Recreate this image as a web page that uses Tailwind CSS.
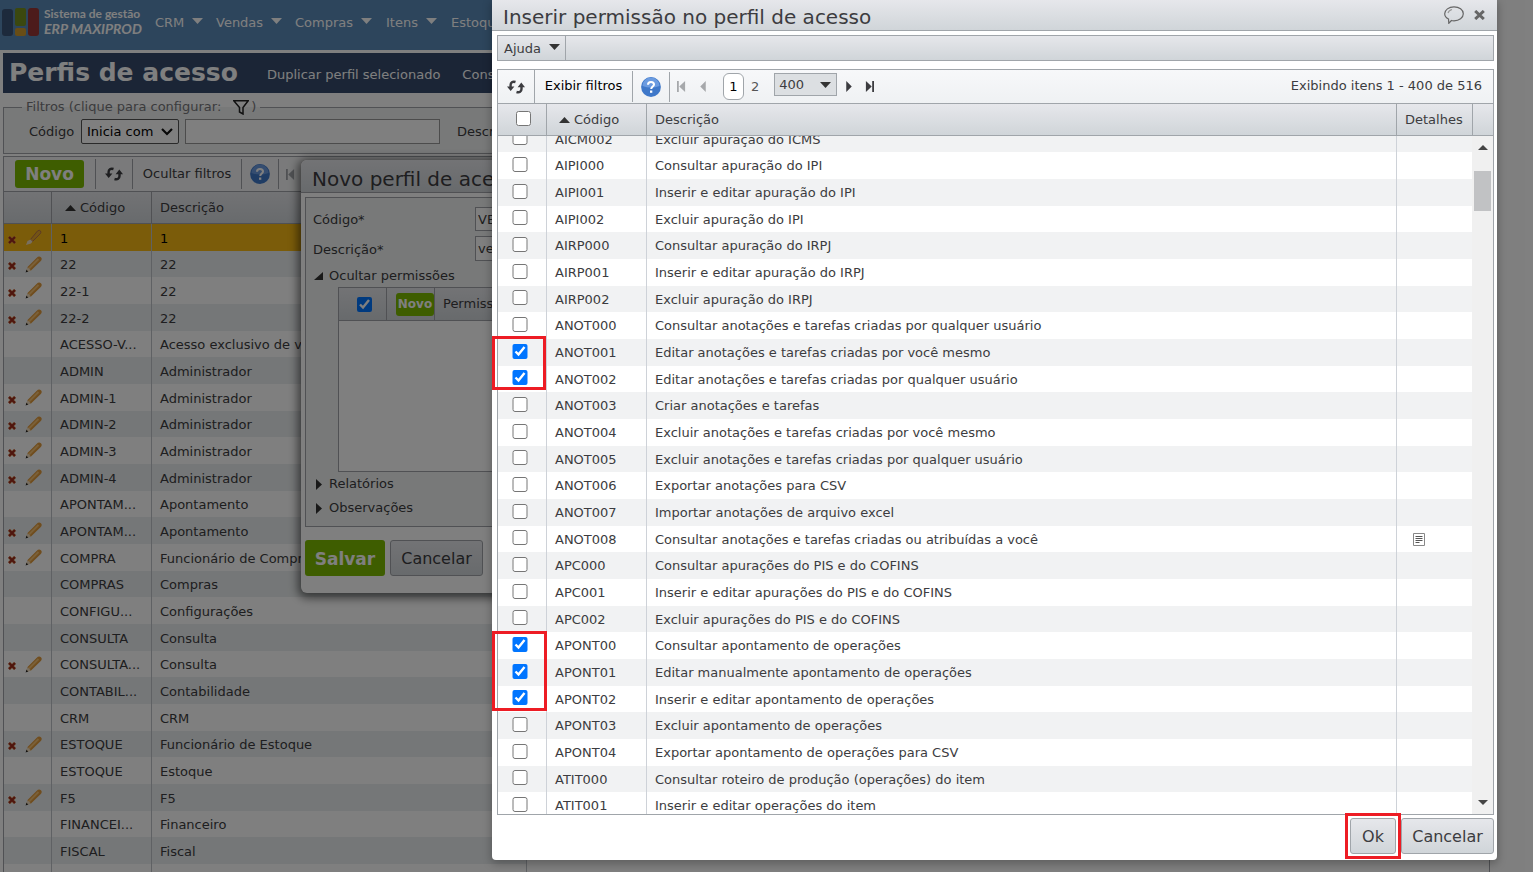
<!DOCTYPE html>
<html lang="pt-BR">
<head>
<meta charset="utf-8">
<title>Perfis de acesso</title>
<script src="https://cdn.jsdelivr.net/npm/@tailwindcss/browser@4"></script>
</head>
<body class="relative h-screen overflow-hidden bg-white pr-[40px] font-['DejaVu_Sans',Verdana,sans-serif] text-[13px] leading-4 text-[#3c3c40]">

<svg class="hidden">
  <symbol id="refresh" viewBox="0 0 18 14"><path d="M8.500 2C5.500 1 3.600 2.500 3.600 5v3M9.500 12c3 1 5-.5 5-3V6" fill="none" stroke="currentColor" stroke-width="2.400"/><path d="M0 6.500h7.400L3.700 11zM10.600 7.300H18L14.300 2.600z" fill="currentColor"/></symbol>
  <symbol id="help" viewBox="0 0 20 20"><circle cx="10" cy="10" r="9.900" fill="#3f78c9"/><path d="M1.500 9a8.500 8.500 0 0 1 17 0q-8.500 3-17 0z" fill="#6b9be0"/><path d="M7 7.700C7 5.800 8.300 5 10 5s3 .9 3 2.500c0 2-2.800 2-2.800 4.500" fill="none" stroke="#fff" stroke-width="2"/><rect x="9" y="13.500" width="2.300" height="2.300" fill="#fff"/></symbol>
  <symbol id="first" viewBox="0 0 10 12"><path d="M0 0h2v12H0zM9 0v12L2.500 6z" fill="currentColor"/></symbol>
  <symbol id="prev" viewBox="0 0 10 12"><path d="M8 0v12L2 6z" fill="currentColor"/></symbol>
  <symbol id="del" viewBox="0 0 8 8"><path d="M1 1l6 6M7 1L1 7" stroke="#d98a4a" stroke-width="3"/><path d="M1 1l6 6M7 1L1 7" stroke="#9c2a1c" stroke-width="2"/></symbol>
  <symbol id="pencil" viewBox="0 0 17 17"><path d="M1 16l1.500-5L11.500 2Q14-.5 15.900 1.300T15.300 5.500L6 14.600z" fill="#e09a3c"/><path d="M4 12.500L13.500 3" stroke="#f6c070" stroke-width="2"/><path d="M1 16l1.500-5 3.500 3.600z" fill="#f0dcc0"/><path d="M.6 16.400l.9-2.600 1.700 1.700z" fill="#222"/></symbol>
  <symbol id="pencil-light" viewBox="0 0 17 17"><path d="M5.500 10.500L12.500 2Q14.500.5 15.500 2T15 5L7.500 12.500z" fill="#e9a92a" stroke="#b8744a" stroke-width="1"/><path d="M1 16l1.500-4 3-1.500 2 2-1.500 2z" fill="#f3dfc0"/></symbol>
</svg>

<!-- Page behind the dialogs -->
<header class="flex h-[50px] items-start bg-[#5a8ab8] text-white">
  <svg class="mt-2 ml-[2px] h-[29px] w-[37px] shrink-0" viewBox="0 0 37 29"><rect y="1" width="11" height="27" rx="3" fill="#3b5478"/><rect x="13" width="11" height="18" rx="2" fill="#76901e"/><rect x="13" y="20" width="11" height="8" rx="2" fill="#d09a2c"/><rect x="26" width="11" height="28" rx="3" fill="#983636"/></svg>
  <a href="#" class="mt-[7px] ml-[5px] w-[111px] shrink-0 font-[Lato] leading-[15px] font-bold"><span class="block text-xs leading-[14px]">Sistema de gestão</span><span class="block text-[14px] font-bold italic">ERP MAXIPROD</span></a>
  <nav id="nav" class="mt-[15px] flex"></nav>
</header>
<main class="px-[3px] pt-[3px]">
  <div class="flex h-10 items-center overflow-hidden bg-[#364a6c] pl-[6px] whitespace-nowrap text-white">
    <h1 class="w-[258px] shrink-0 text-[25px] leading-8 font-bold">Perfis de acesso</h1>
    <a href="#" class="mt-1">Duplicar perfil selecionado</a>
    <a href="#" class="mt-1 ml-[22px]">Consultar</a>
  </div>
  <fieldset class="mt-[6px] border border-[#a0a3a8] bg-[#f1f3f3] pb-[9px] pl-[18px]">
    <legend class="flex items-center px-1 text-[#77777b]">Filtros (clique para configurar:
      <svg class="mr-[2px] ml-3 h-[15px] w-4" viewBox="0 0 16 15"><path d="M.8.8h14.400L10 7.500V14l-3.500-2V7.500z" fill="none" stroke="#222" stroke-width="1.500"/></svg>)</legend>
    <div class="mt-1 flex items-center whitespace-nowrap">
      <label for="op" class="w-[59px] pl-[7px]">Código</label>
      <div class="relative">
        <select id="op" class="block h-[25px] w-[98px] appearance-none rounded-[2px] border border-[#555] bg-white pl-[5px] text-[13px] text-black"><option>Inicia com</option></select>
        <svg class="pointer-events-none absolute top-[9px] right-[6px] h-2 w-3" viewBox="0 0 12 8"><path d="M1 1l5 5 5-5" fill="none" stroke="#111" stroke-width="2.200"/></svg>
      </div>
      <input aria-label="Código" class="ml-[6px] h-[25px] w-[255px] border border-[#999] bg-white">
      <label for="desc" class="ml-[17px]">Descrição</label><input id="desc" class="ml-2 w-40 border border-[#999]">
    </div>
  </fieldset>
  <section class="mt-[2px] border border-b-0 border-[#a0a3a8]">
    <div class="flex h-[34px] items-center bg-[#f4f5f6]">
      <button class="ml-[11px] h-7 w-[69px] shrink-0 rounded-[3px] bg-[#7cba00] text-[17px] font-bold text-white">Novo</button>
      <button aria-label="Atualizar" class="ml-[11px] flex h-[30px] w-[38px] items-center justify-center border-x border-[#a0a3a8]"><svg class="h-[14px] w-[18px]"><use href="#refresh"/></svg></button>
      <button class="h-[30px] w-[109px] whitespace-nowrap border-r border-[#a0a3a8]">Ocultar filtros</button>
      <button aria-label="Ajuda" class="flex h-[30px] w-[37px] items-center justify-center border-r border-[#a0a3a8]"><svg class="h-5 w-5"><use href="#help"/></svg></button>
      <svg class="ml-[7px] h-[11px] w-[9px] text-[#a0a3a8]"><use href="#first"/></svg>
    </div>
    <table class="w-[523px] table-fixed border-separate border-spacing-0 border-r border-[#bfc3c8] text-left whitespace-nowrap">
      <colgroup><col class="w-[48px]"><col class="w-[100px]"><col></colgroup>
      <thead><tr class="h-[33px] bg-linear-to-b from-[#e6e7eb] to-[#d0d5d9]">
        <th aria-label="Ações" class="border-y border-r border-[#a0a3a8]"></th><th class="border-y border-r border-[#a0a3a8] p-0 pl-[13px] font-normal"><span class="flex items-center gap-1"><svg class="h-[6px] w-[11px]" viewBox="0 0 11 6"><path d="M0 6L5.500 0 11 6z" fill="#333"/></svg>Código</span></th><th class="border-y border-[#a0a3a8] p-0 pl-2 font-normal">Descrição</th>
      </tr></thead>
      <tbody id="profiles"></tbody>
    </table>
  </section>
</main>

<!-- New profile dialog -->
<section role="dialog" aria-label="Novo perfil de acesso" class="absolute top-[160px] left-[301px] w-[420px] overflow-hidden rounded-md bg-white pb-[17px] shadow-[0_2px_10px_3px_rgba(0,0,0,0.55)]">
  <h2 class="h-[33px] border-b border-[#a0a3a8] bg-linear-to-b from-[#e6e7eb] to-[#d0d5d9] pt-[5px] pl-[11px] text-[20px] leading-7 whitespace-nowrap">Novo perfil de acesso</h2>
  <div class="mt-1 ml-1 h-[330px] border border-[#a0a3a8] bg-[#f1f3f3] pl-[7px]">
    <div class="mt-[9px] flex items-center"><label for="nc" class="mt-[2px] w-[162px]">Código*</label><input id="nc" value="VENDAS" class="h-6 w-60 border border-[#a0a3a8] bg-white px-[2px]"></div>
    <div class="mt-[5px] flex items-center"><label for="nd" class="mt-[2px] w-[162px]">Descrição*</label><input id="nd" value="vendas" class="h-[25px] w-60 border border-[#a0a3a8] bg-white px-[2px]"></div>
    <button class="mt-[7px] ml-[1px] flex items-center gap-[6px] leading-4"><svg class="h-2 w-[9px]" viewBox="0 0 9 8"><path d="M9 0v8H0z" fill="#333"/></svg>Ocultar permissões</button>
    <div class="mt-[3px] ml-[25px] h-[185px] border border-[#a0a3a8] bg-white">
      <div class="flex h-[33px] items-center border-b border-[#a0a3a8] bg-linear-to-b from-[#e6e7eb] to-[#d0d5d9]">
        <div class="flex h-full w-12 items-center justify-center border-r border-[#a0a3a8]"><input type="checkbox" checked aria-label="Todas" class="m-0 ml-1 h-[15px] w-[15px]"></div>
        <div class="flex h-full w-12 items-center justify-end border-r border-[#a0a3a8]"><button class="h-[23px] w-[38px] rounded-[3px] bg-[#7cba00] text-xs font-bold text-white">Novo</button></div>
        <span class="pl-2">Permissão</span>
      </div>
    </div>
    <button class="mt-1 flex items-center gap-[7px] pl-[3px] leading-4"><svg class="h-[11px] w-[6px]" viewBox="0 0 6 11"><path d="M0 0l6 5.500L0 11z" fill="#333"/></svg>Relatórios</button>
    <button class="mt-2 flex items-center gap-[7px] pl-[3px] leading-4"><svg class="h-[11px] w-[6px]" viewBox="0 0 6 11"><path d="M0 0l6 5.500L0 11z" fill="#333"/></svg>Observações</button>
  </div>
  <div class="mt-[13px] ml-1 flex gap-[5px]">
    <button class="h-9 w-20 rounded-[3px] bg-[#7cba00] pt-[2px] text-[17px] font-bold text-white">Salvar</button>
    <button class="h-9 w-[93px] rounded-[3px] border border-[#a0a3a8] bg-linear-to-b from-[#e6e7eb] to-[#d0d5d9] pt-[2px] text-base">Cancelar</button>
  </div>
</section>

<div class="absolute inset-0 bg-black/50"></div>

<!-- Permission dialog -->
<section role="dialog" aria-label="Inserir permissão no perfil de acesso" class="absolute top-0 right-[36px] bottom-[12px] left-[492px] flex flex-col rounded-b bg-white shadow-[0_3px_8px_1px_rgba(0,0,0,0.25)]">
  <div class="flex h-[31px] shrink-0 items-center border-b border-[#a0a5aa] bg-linear-to-b from-[#e6e7eb] to-[#d0d5d9] pr-3 pl-[11px]">
    <h2 class="mt-1 text-[20px] leading-7">Inserir permissão no perfil de acesso</h2>
    <button aria-label="Comentário" class="ml-auto"><svg class="h-[18px] w-5" viewBox="0 0 20 18" fill="none" stroke="#666" stroke-width="1.200"><path d="M4.500 13C2 11.800.7 10 .7 7.800.7 4 4.800.8 10 .8s9.300 3 9.300 7-4.100 7-9.300 7c-1 0-1.800-.1-2.600-.3L4.800 17.300z"/><path d="M4 7c.5-1.800 2-3 4-3.500" stroke="#999"/></svg></button>
    <button aria-label="Fechar" class="ml-[10px]"><svg class="h-[10px] w-[11px]" viewBox="0 0 11 10"><path d="M1.200 1l8.600 8M9.800 1L1.200 9" stroke="#666" stroke-width="3"/></svg></button>
  </div>
  <div class="mt-1 mr-[3px] ml-[5px] flex h-[26px] shrink-0 border border-[#a0a5aa] bg-linear-to-b from-[#e6e7eb] to-[#d0d5d9]">
    <button class="flex w-[68px] items-center gap-[8px] border-r border-[#a0a5aa] pt-[2px] pl-[6px]">Ajuda<svg class="mb-1 h-[6px] w-[11px] shrink-0" viewBox="0 0 11 6"><path d="M0 0h11L5.500 6z" fill="#333"/></svg></button>
  </div>
  <div class="mt-2 mr-[3px] ml-[5px] flex min-h-0 flex-1 flex-col border border-[#a0a5aa]">
    <div class="flex h-[33px] shrink-0 items-center bg-linear-to-b from-[#f7f8fa] to-[#eff1f3] whitespace-nowrap">
      <button aria-label="Atualizar" class="flex h-full w-[37px] items-center justify-center border-r border-[#a0a5aa]"><svg class="h-[14px] w-[18px]"><use href="#refresh"/></svg></button>
      <button class="h-[31px] w-[98px] border-r border-[#a0a5aa] pb-[2px] text-black">Exibir filtros</button>
      <button aria-label="Ajuda" class="flex h-[30px] w-[37px] items-center justify-center border-r border-[#a0a5aa]"><svg class="h-5 w-5"><use href="#help"/></svg></button>
      <button aria-label="Primeira" class="ml-[7px] text-[#a6a8ab]"><svg class="h-[11px] w-[9px]"><use href="#first"/></svg></button>
      <button aria-label="Anterior" class="ml-3 text-[#a6a8ab]"><svg class="h-[11px] w-[10px]"><use href="#prev"/></svg></button>
      <button class="ml-[15px] h-[27px] w-[21px] rounded-md border border-[#a0a5aa] bg-white text-black">1</button>
      <button class="ml-[7px] text-[#555]">2</button>
      <div class="relative ml-[15px] pb-1"><select aria-label="Itens por página" class="block h-[23px] w-[63px] appearance-none border border-[#a0a5aa] bg-[#dcdfe2] pl-1 text-[13px]"><option>400</option></select><svg class="pointer-events-none absolute top-[9px] right-[6px] h-[6px] w-[11px]" viewBox="0 0 11 6"><path d="M0 0h11L5.500 6z" fill="#333"/></svg></div>
      <button aria-label="Próxima" class="ml-[7px]"><svg class="h-[11px] w-[10px] rotate-180"><use href="#prev"/></svg></button>
      <button aria-label="Última" class="ml-[11px]"><svg class="h-[11px] w-[9px] rotate-180"><use href="#first"/></svg></button>
      <span class="mr-[11px] ml-auto pb-[2px]">Exibindo itens 1 - 400 de 516</span>
    </div>
    <div class="flex h-[33px] shrink-0 items-center border-y border-[#a0a5aa] bg-linear-to-b from-[#e6e7eb] to-[#d0d5d9]">
      <div class="flex h-full w-[49px] items-center justify-center border-r border-[#a0a5aa] pl-[2px]"><input type="checkbox" aria-label="Selecionar todas" class="m-0 mb-[2px] h-[15px] w-[15px]"></div>
      <button class="flex h-full w-[100px] items-center gap-1 border-r border-[#a0a5aa] pl-3"><svg class="h-[6px] w-[11px]" viewBox="0 0 11 6"><path d="M0 6L5.500 0 11 6z" fill="#333"/></svg>Código</button>
      <span class="flex-1 pl-2">Descrição</span>
      <span class="flex h-full w-[77px] items-center border-x border-[#a0a5aa] pl-2">Detalhes</span>
      <span class="w-[20px]"></span>
    </div>
    <div class="flex min-h-0 flex-1 overflow-hidden">
      <div class="min-w-0 flex-1 overflow-hidden">
        <table class="-mt-[10px] w-full table-fixed border-separate border-spacing-0 whitespace-nowrap">
          <colgroup><col class="w-[49px]"><col class="w-[100px]"><col><col class="w-[75px]"></colgroup>
          <tbody id="perms"></tbody>
        </table>
      </div>
      <div class="flex w-[21px] flex-col items-center bg-[#f0f0f0] py-[9px]">
        <svg class="h-[5px] w-[10px]" viewBox="0 0 10 5"><path d="M0 5l5-5 5 5z" fill="#444"/></svg>
        <div class="mt-[21px] h-10 w-[17px] bg-[#c1c2c4]"></div>
        <svg class="mt-auto h-[5px] w-[10px]" viewBox="0 0 10 5"><path d="M0 0h10L5 5z" fill="#444"/></svg>
      </div>
    </div>
  </div>
  <div class="mt-[3px] mr-[3px] mb-[6px] flex shrink-0 justify-end gap-[5px] text-base">
    <div class="relative"><button class="h-9 w-[46px] rounded-[3px] border border-[#a0a5aa] bg-linear-to-b from-[#e6e7eb] to-[#d0d5d9] pt-[2px]">Ok</button><div class="pointer-events-none absolute -inset-x-[5px] -inset-y-[5px] border-[3px] border-[#ed1c24]"></div></div>
    <button class="relative h-9 w-[93px] rounded-[3px] border border-[#a0a5aa] bg-linear-to-b from-[#e6e7eb] to-[#d0d5d9] pt-[2px]">Cancelar</button>
  </div>
  <div class="pointer-events-none absolute top-[336px] left-0 h-[54px] w-[54px] border-[3px] border-[#ed1c24]"></div>
  <div class="pointer-events-none absolute top-[631px] left-0 h-[80px] w-[55px] border-[3px] border-[#ed1c24]"></div>
</section>

<script>
const nav = [["CRM","w-[61px]"],["Vendas","w-[79px]"],["Compras","w-[91px]"],["Itens","w-[65px]"],["Estoque","w-[90px]"]];
document.getElementById("nav").innerHTML = nav.map(([t, w]) => `<button class="${w} flex shrink-0 items-start gap-2">${t}<svg class="mt-[3px] h-[6px] w-[11px] shrink-0" viewBox="0 0 11 6"><path d="M0 0h11L5.500 6z" fill="#fff"/></svg></button>`).join("");

const profiles = `1|1|e
22|22|e
22-1|22|e
22-2|22|e
ACESSO-V...|Acesso exclusivo de vendas|
ADMIN|Administrador|
ADMIN-1|Administrador|e
ADMIN-2|Administrador|e
ADMIN-3|Administrador|e
ADMIN-4|Administrador|e
APONTAM...|Apontamento|
APONTAM...|Apontamento|e
COMPRA|Funcionário de Compras|e
COMPRAS|Compras|
CONFIGU...|Configurações|
CONSULTA|Consulta|
CONSULTA...|Consulta|e
CONTABIL...|Contabilidade|
CRM|CRM|
ESTOQUE|Funcionário de Estoque|e
ESTOQUE|Estoque|
F5|F5|e
FINANCEI...|Financeiro|
FISCAL|Fiscal|
||`.split("\n").map(r => r.split("|"));
document.getElementById("profiles").innerHTML = profiles.map(([c, d, e], i) => `<tr class="h-[27px] nth-[3n+2]:h-[26px] ${i === 0 ? "bg-[#f6b814] text-black" : i % 2 ? "bg-[#ebeff0]" : "bg-white"}">
<td class="border-r border-[#bfc3c8] p-0 pl-1">${e ? `<span class="flex items-center gap-[9px]"><button aria-label="Excluir"><svg class="mt-1 block h-2 w-2"><use href="#del"/></svg></button><button aria-label="Editar"><svg class="block h-[17px] w-[17px]"><use href="${i ? "#pencil" : "#pencil-light"}"/></svg></button></span>` : ""}</td>
<td class="border-r border-[#bfc3c8] p-0 pt-[2px] pl-2">${c}</td><td class="p-0 pt-[2px] pl-2">${d}</td></tr>`).join("");

const perms = `AICM002|Excluir apuração do ICMS
AIPI000|Consultar apuração do IPI
AIPI001|Inserir e editar apuração do IPI
AIPI002|Excluir apuração do IPI
AIRP000|Consultar apuração do IRPJ
AIRP001|Inserir e editar apuração do IRPJ
AIRP002|Excluir apuração do IRPJ
ANOT000|Consultar anotações e tarefas criadas por qualquer usuário
ANOT001|Editar anotações e tarefas criadas por você mesmo|x
ANOT002|Editar anotações e tarefas criadas por qualquer usuário|x
ANOT003|Criar anotações e tarefas
ANOT004|Excluir anotações e tarefas criadas por você mesmo
ANOT005|Excluir anotações e tarefas criadas por qualquer usuário
ANOT006|Exportar anotações para CSV
ANOT007|Importar anotações de arquivo excel
ANOT008|Consultar anotações e tarefas criadas ou atribuídas a você
APC000|Consultar apurações do PIS e do COFINS
APC001|Inserir e editar apurações do PIS e do COFINS
APC002|Excluir apurações do PIS e do COFINS
APONT00|Consultar apontamento de operações|x
APONT01|Editar manualmente apontamento de operações|x
APONT02|Inserir e editar apontamento de operações|x
APONT03|Excluir apontamento de operações
APONT04|Exportar apontamento de operações para CSV
ATIT000|Consultar roteiro de produção (operações) do item
ATIT001|Inserir e editar operações do item`.split("\n").map(r => r.split("|"));
document.getElementById("perms").innerHTML = perms.map(([c, d, x]) => `<tr class="h-[27px] nth-[3n+1]:h-[26px] odd:bg-[#f1f2f3]">
<td class="border-r border-[#ced2d8] p-0 pl-[14px]"><input type="checkbox" id="${c}" ${x ? "checked" : ""} class="m-0 mb-[3px] block h-[15px] w-4"></td>
<td class="border-r border-[#ced2d8] p-0 pt-px pl-2"><label for="${c}">${c}</label></td><td class="border-r border-[#ced2d8] p-0 pt-px pl-2">${d}</td>
<td class="p-0">${c === "ANOT008" ? `<button aria-label="Detalhes" class="ml-4 block pt-px"><svg class="block h-[13px] w-3" viewBox="0 0 12 13" fill="none" stroke="#777"><path d="M.5.5h11v12H.5z" stroke="#888"/><path d="M2.500 3.500h7M2.500 5.500h7M2.500 7.500h7M2.500 9.500h4" stroke="#555"/></svg></button>` : ""}</td></tr>`).join("");
</script>
</body>
</html>
